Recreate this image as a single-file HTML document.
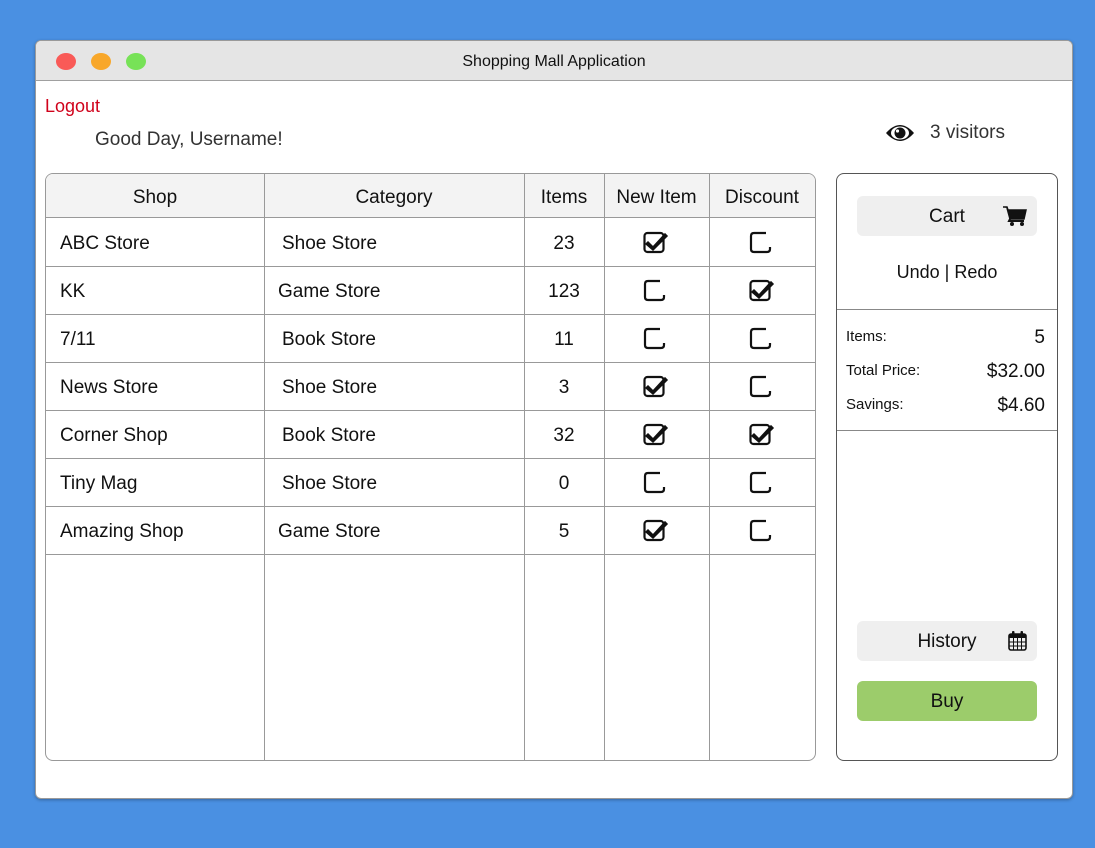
<!DOCTYPE html>
<html><head><meta charset="utf-8"><style>
*{margin:0;padding:0;box-sizing:border-box}
body{width:1095px;height:848px;background:#4a90e2;font-family:"Liberation Sans",sans-serif;position:relative;overflow:hidden}
.win{position:absolute;left:35px;top:40px;width:1038px;height:759px;background:#fff;border:1px solid #9a9a9a;border-radius:6px;overflow:hidden;box-shadow:0 1px 3px rgba(0,0,0,.3)}
.tb{height:40px;background:#e5e5e5;border-bottom:1px solid #a0a0a0;position:relative}
.dot{position:absolute;top:12px;width:20px;height:17px;border-radius:50%}
.tt{position:absolute;left:0;right:0;top:12px;text-align:center;font-size:16px;color:#111}
.a{position:absolute}
.tw{position:absolute;left:9px;top:132px;width:771px;height:588px;border:1px solid #999;border-radius:8px;overflow:hidden}
.col{position:absolute;top:0;bottom:0;border-left:1px solid #999}
.hd{position:absolute;left:0;right:0;top:0;height:44px;background:#f3f3f3;border-bottom:1px solid #999}
.rl{position:absolute;left:0;right:0;height:1px;background:#999}
.t{position:absolute;font-size:19px;color:#111;white-space:nowrap}
.c{text-align:center}
.rp{position:absolute;left:800px;top:132px;width:222px;height:588px;border:1px solid #555;border-radius:8px}
.btn{position:absolute;left:20px;width:180px;height:40px;border-radius:6px;background:#efefef;font-size:19px;text-align:center;line-height:42px;color:#111}
</style></head><body>
<div class="win">
 <div class="tb">
  <div class="dot" style="left:20px;background:#f95a57"></div>
  <div class="dot" style="left:55px;background:#f8a72a"></div>
  <div class="dot" style="left:90px;background:#77e257"></div>
  <div class="tt">Shopping Mall Application</div>
 </div>
 <div class="t" style="left:9px;top:55px;color:#d0021b;font-size:18px">Logout</div>
 <div class="t" style="left:59px;top:88px;color:#333;font-size:19px">Good Day, Username!</div>
 <svg class="a" style="left:849px;top:82px" width="30" height="20" viewBox="0 0 30 20"><path d="M1 10 Q15 -6 29 10 Q15 26 1 10Z" fill="#111"/><ellipse cx="15" cy="10" rx="9" ry="6.5" fill="#fff"/><circle cx="15" cy="10" r="5.5" fill="#111"/><circle cx="12.5" cy="8" r="1.6" fill="#fff"/></svg>
 <div class="t" style="left:894px;top:81px;color:#333;font-size:19px">3 visitors</div>

 <div class="tw">
  <div class="hd"></div>
  <div class="col" style="left:218px"></div>
  <div class="col" style="left:478px"></div>
  <div class="col" style="left:558px"></div>
  <div class="col" style="left:663px"></div>
  <div class="rl" style="top:92px"></div><div class="rl" style="top:140px"></div><div class="rl" style="top:188px"></div><div class="rl" style="top:236px"></div><div class="rl" style="top:284px"></div><div class="rl" style="top:332px"></div><div class="rl" style="top:380px"></div>
  <div class="t c" style="left:0;width:218px;top:13px">Shop</div>
  <div class="t c" style="left:218px;width:260px;top:13px">Category</div>
  <div class="t c" style="left:478px;width:80px;top:13px">Items</div>
  <div class="t c" style="left:558px;width:105px;top:13px">New Item</div>
  <div class="t c" style="left:663px;width:106px;top:13px">Discount</div>
  <div id="rows"></div>
 </div>

 <div class="rp">
  <div class="btn" style="top:22px">Cart<svg style="position:absolute;right:10px;top:10px" width="24" height="20" viewBox="0 0 24 20"><path d="M0 1H4L5 4H23L21 13H7L4 2" fill="#111" stroke="#111" stroke-width="1.5"/><path d="M7 13L6 15H21" stroke="#111" stroke-width="2" fill="none"/><circle cx="9" cy="18" r="2" fill="#111"/><circle cx="19" cy="18" r="2" fill="#111"/></svg></div>
  <div class="t c" style="left:0;width:220px;top:88px;font-size:18px">Undo | Redo</div>
  <div class="a" style="left:0;right:0;top:135px;height:1px;background:#888"></div>
  <div class="t" style="left:9px;top:154px;font-size:15px">Items:</div><div class="t" style="right:12px;top:153px">5</div>
  <div class="t" style="left:9px;top:188px;font-size:15px">Total Price:</div><div class="t" style="right:12px;top:187px">$32.00</div>
  <div class="t" style="left:9px;top:222px;font-size:15px">Savings:</div><div class="t" style="right:12px;top:221px">$4.60</div>
  <div class="a" style="left:0;right:0;top:256px;height:1px;background:#888"></div>
  <div class="btn" style="top:447px">History<svg style="position:absolute;right:10px;top:10px" width="19" height="20" viewBox="0 0 19 20"><rect x="1" y="3" width="17" height="16" rx="2" fill="none" stroke="#111" stroke-width="1.6"/><rect x="1" y="3" width="17" height="4" fill="#111"/><path d="M1 11H18M1 15H18M5.5 7V19M9.5 7V19M13.5 7V19" stroke="#111" stroke-width="1"/><rect x="4" y="0" width="2.5" height="5" rx="1" fill="#111"/><rect x="12.5" y="0" width="2.5" height="5" rx="1" fill="#111"/></svg></div>
  <div class="btn" style="top:507px;background:#9ccc6b">Buy</div>
 </div>
</div>
<script>
var d=[["ABC Store","Shoe Store","23",1,0,0],["KK","Game Store","123",0,1,-4],["7/11","Book Store","11",0,0,0],["News Store","Shoe Store","3",1,0,0],["Corner Shop","Book Store","32",1,1,0],["Tiny Mag","Shoe Store","0",0,0,0],["Amazing Shop","Game Store","5",1,0,-4]];
function cb(x,y,c){return '<svg style="position:absolute;left:'+x+'px;top:'+y+'px" width="26" height="24" viewBox="0 0 26 24">'+(c?'<rect x="1.5" y="3" width="19" height="19" rx="3" fill="none" stroke="#111" stroke-width="2.2"/><path d="M5 12L10 17L22 4L24 6L10 20L3 14Z" fill="#111" stroke="#111" stroke-width="1.5"/>':'<path d="M17 3H5Q2 3 2 6V19Q2 22 5 22H18Q21 22 21 19V17" fill="none" stroke="#111" stroke-width="2.2"/>')+'</svg>';}
var h='';d.forEach(function(r,i){var y=44+i*48;h+='<div class="t" style="left:14px;top:'+(y+15)+'px">'+r[0]+'</div><div class="t" style="left:'+(236+r[5])+'px;top:'+(y+15)+'px">'+r[1]+'</div><div class="t c" style="left:478px;width:80px;top:'+(y+15)+'px">'+r[2]+'</div>'+cb(597,y+12,r[3])+cb(703,y+12,r[4]);});
document.getElementById('rows').innerHTML=h;
</script>
</body></html>
